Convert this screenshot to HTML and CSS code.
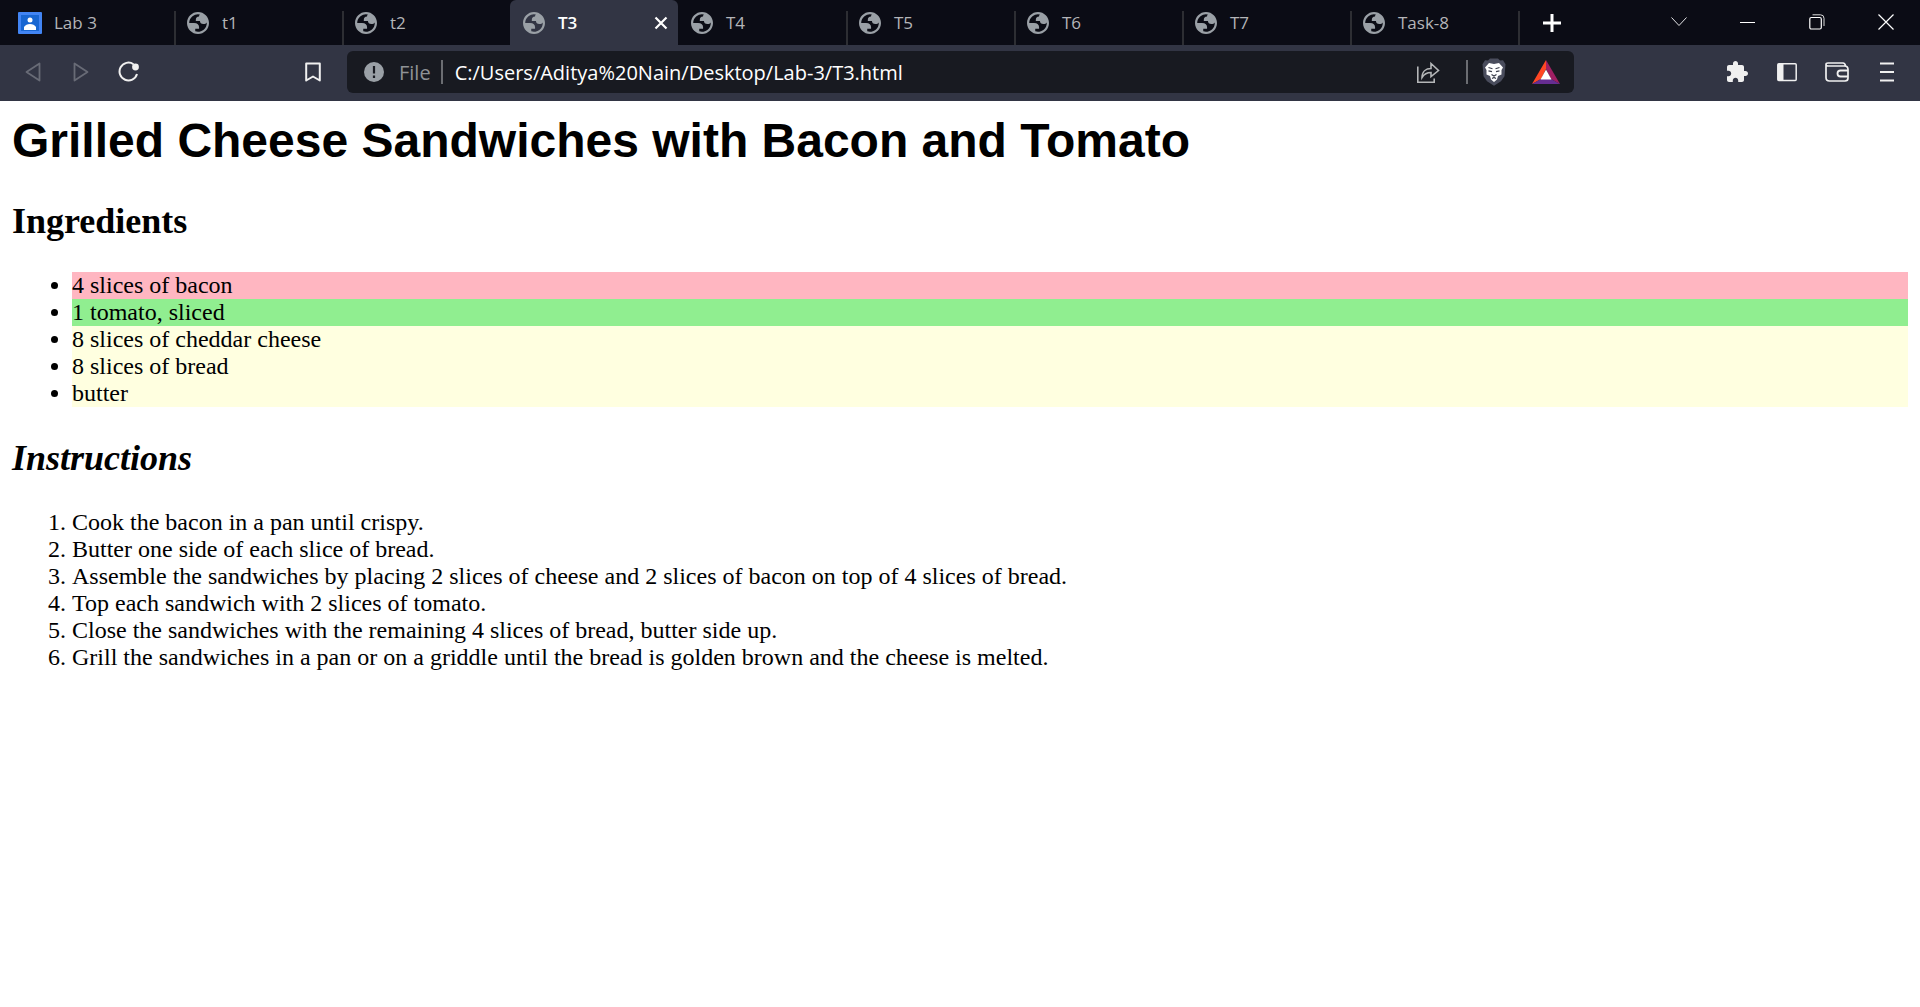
FILE: index.html
```html
<!DOCTYPE html>
<html lang="en">
<head>
<meta charset="utf-8">
<title>T3</title>
<link rel="stylesheet" href="styles.css">
</head>
<body>
<svg class="defs" aria-hidden="true">
  <symbol id="globe" viewBox="2 2 20 20"><path fill-rule="evenodd" d="M12 2c5.523 0 10 4.477 10 10s-4.477 10-10 10S2 17.523 2 12 6.477 2 12 2zM4 12h4.400c3.407.022 4.922 1.730 4.543 5.127H9.488v2.470a8.004 8.004 0 0 0 10.498-8.083C19.327 12.504 18.332 13 17 13c-2.137 0-3.206-.916-3.206-2.750h-3.748c-.274-2.728.683-4.092 2.870-4.092 0-.975.327-1.597.811-1.970A8.004 8.004 0 0 0 4 12z" fill="currentColor"/></symbol>
</svg>
<header class="chrome">
  <nav class="tab-strip" aria-label="Tabs">
    <a class="tab" href="#"><svg class="classroom" viewBox="0 0 24 22"><rect width="24" height="22" rx="1" fill="#4285f4"/><rect x="3" y="3" width="18" height="16" fill="#1967d2"/><circle cx="12" cy="8" r="2.500" fill="#fff"/><path d="M6 18v-3q2-3 6-3t6 3v3z" fill="#fff"/></svg><span>Lab 3</span></a>
    <a class="tab ruled" href="#"><svg class="globe"><use href="#globe"/></svg><span>t1</span></a>
    <a class="tab ruled" href="#"><svg class="globe"><use href="#globe"/></svg><span>t2</span></a>
    <div class="tab active"><svg class="globe"><use href="#globe"/></svg><span>T3</span><button class="tab-close" aria-label="Close tab"><svg width="14" height="14" viewBox="0 0 14 14"><path d="M1.500 1.500l11 11M12.500 1.500l-11 11" stroke="#fff" stroke-width="2.200"/></svg></button></div>
    <a class="tab" href="#"><svg class="globe"><use href="#globe"/></svg><span>T4</span></a>
    <a class="tab ruled" href="#"><svg class="globe"><use href="#globe"/></svg><span>T5</span></a>
    <a class="tab ruled" href="#"><svg class="globe"><use href="#globe"/></svg><span>T6</span></a>
    <a class="tab ruled" href="#"><svg class="globe"><use href="#globe"/></svg><span>T7</span></a>
    <a class="tab ruled" href="#"><svg class="globe"><use href="#globe"/></svg><span>Task-8</span></a>
    <button class="new-tab ruled" aria-label="New tab"><svg width="20" height="20" viewBox="0 0 20 20"><path d="M10 1v18M1 10h18" stroke="#fff" stroke-width="3"/></svg></button>
    <div class="window-controls">
      <button aria-label="Search tabs"><svg width="16" height="10" viewBox="0 0 16 10"><path d="M.5 .5L8 8.500L15.500 .5" fill="none" stroke="#e4e4e6"/></svg></button>
      <button aria-label="Minimize"><svg width="16" height="16" viewBox="0 0 16 16"><path d="M0 8.500h15" stroke="#fff"/></svg></button>
      <button aria-label="Restore"><svg width="16" height="16" viewBox="0 0 16 16"><rect x=".8" y="3.500" width="11.500" height="11.500" rx="1.500" fill="none" stroke="#fff" stroke-width="1.200"/><path d="M3.500 .8H11.500Q15 .8 15 4.300V12" fill="none" stroke="#ddd"/></svg></button>
      <button aria-label="Close"><svg width="16" height="16" viewBox="0 0 16 16"><path d="M.5 .5l15 15M15.500 .5l-15 15" stroke="#fff" stroke-width="1.200"/></svg></button>
    </div>
  </nav>
  <div class="toolbar">
    <div class="nav-buttons">
      <button aria-label="Back"><svg width="16" height="22" viewBox="0 0 16 22"><path d="M14.500 2.500v17L1.500 11z" fill="none" stroke="#686b76" stroke-width="1.800" stroke-linejoin="round"/></svg></button>
      <button aria-label="Forward"><svg width="16" height="22" viewBox="0 0 16 22"><path d="M1.500 2.500v17L14.500 11z" fill="none" stroke="#686b76" stroke-width="1.800" stroke-linejoin="round"/></svg></button>
      <button aria-label="Reload"><svg width="22" height="22" viewBox="0 0 22 22"><path d="M15.500 3.200A8.900 8.900 0 1 0 19 13" fill="none" stroke="#f0f0f0" stroke-width="2"/><circle cx="17.500" cy="6" r="3.400" fill="#f0f0f0"/></svg></button>
      <button class="bookmark" aria-label="Bookmark"><svg width="16" height="20" viewBox="0 0 16 20"><path d="M1.200 1.500h13.600v17L8 14.500l-6.800 4z" fill="none" stroke="#f0f0f0" stroke-width="2" stroke-linejoin="round"/></svg></button>
    </div>
    <div class="address">
      <svg width="20" height="20" viewBox="0 0 20 20"><circle cx="10" cy="10" r="10" fill="#9aa0a6"/><path d="M10 4v7.500M10 13.500v2.500" stroke="#181a21" stroke-width="2.200"/></svg>
      <label class="scheme" for="url">File</label>
      <span class="rule"></span>
      <input id="url" type="text" value="C:/Users/Aditya%20Nain/Desktop/Lab-3/T3.html">
      <button class="share" aria-label="Share"><svg width="24" height="24" viewBox="0 0 24 24"><path d="M1.800 6.500V22.200H18.200V18.500M6 17.500C6 11.500 10 8.500 15 8.500V3.500L22.500 10.500L15 16.500V12.500C11 12.500 8.500 13.500 6 17.500Z" fill="none" stroke="#b4b6b8" stroke-width="1.600"/></svg></button>
      <span class="rule"></span>
      <button aria-label="Brave Shields"><svg width="24" height="28" viewBox="0 0 24 28"><path d="M8 .5h8l2 2 3-.3 2.500 4-1 12-3.500 5-7 4.500-7-4.500-3.500-5-1-12 2.500-4 3 .3z" fill="#4a4d5d"/><path d="M7 5l5 1 5-1 4 4.500-1.500 2.500 0 4.500-3.500 1.500-1 3.500-3 2.500-3-2.500-1-3.500-3.500-1.500 0-4.500L3 9.500z" fill="#fff"/><path d="M6.500 9.500l4 1.200M17.500 9.500l-4 1.200M6.500 12.800l3.500.8M17.500 12.800l-3.500.8M9.500 16.500l2.500 1.500 2.500-1.500M10 20.500l2-1 2 1" fill="none" stroke="#3c3f4d" stroke-width="1.200"/></svg></button>
      <button aria-label="Brave Rewards"><svg width="28" height="24" viewBox="0 0 28 24"><path d="M14 0L0 24L9 19L14 9z" fill="#ff4724"/><path d="M14 0L28 24L19 19L14 9z" fill="#9e1f63"/><path d="M0 24L9 19h10l9 5z" fill="#662d91"/><path d="M14 9.500l5.500 10h-11z" fill="#fff"/></svg></button>
    </div>
    <div class="tools">
      <button aria-label="Extensions"><svg width="24" height="24" viewBox="0 0 24 24"><path d="M20.500 11H19V7c0-1.100-.9-2-2-2h-4V3.500C13 2.120 11.880 1 10.500 1S8 2.120 8 3.500V5H4c-1.100 0-1.990.9-1.990 2v3.800H3.500c1.490 0 2.700 1.210 2.700 2.700s-1.210 2.700-2.700 2.700H2V20c0 1.100.9 2 2 2h3.800v-1.500c0-1.490 1.210-2.700 2.700-2.700 1.490 0 2.700 1.210 2.700 2.700V22H17c1.100 0 2-.9 2-2v-4h1.500c1.380 0 2.500-1.120 2.500-2.500S21.880 11 20.500 11z" fill="#f0f0f0"/></svg></button>
      <button aria-label="Sidebar"><svg width="20" height="20" viewBox="0 0 20 20"><rect x=".8" y="1.800" width="18.400" height="16.800" rx="1" fill="none" stroke="#f0f0f0" stroke-width="1.500"/><path d="M1 2h5.500v16.500H1z" fill="#f0f0f0"/></svg></button>
      <button aria-label="Wallet"><svg width="24" height="20" viewBox="0 0 24 20"><path d="M1 3v12.500Q1 19 4.500 19H20q3 0 3-3V7.500Q23 4 19.500 4H3Q1 4 1 2.500T3 1h15q2 0 2.500 3" fill="none" stroke="#f0f0f0" stroke-width="1.700"/><path d="M23 8.500h-7.500a3 3 0 0 0 0 6H23" fill="none" stroke="#f0f0f0" stroke-width="1.800"/></svg></button>
      <button aria-label="Menu"><svg width="14" height="20" viewBox="0 0 14 20"><path d="M0 1.500h14M0 10h14M0 18.500h14" stroke="#f0f0f0" stroke-width="2"/></svg></button>
    </div>
  </div>
</header>
<main class="page">
  <h1>Grilled Cheese Sandwiches with Bacon and Tomato</h1>
  <h2>Ingredients</h2>
  <ul class="ingredients">
    <li class="bacon">4 slices of bacon</li>
    <li class="tomato">1 tomato, sliced</li>
    <li>8 slices of cheddar cheese</li>
    <li>8 slices of bread</li>
    <li>butter</li>
  </ul>
  <h2 class="instructions">Instructions</h2>
  <ol>
    <li>Cook the bacon in a pan until crispy.</li>
    <li>Butter one side of each slice of bread.</li>
    <li>Assemble the sandwiches by placing 2 slices of cheese and 2 slices of bacon on top of 4 slices of bread.</li>
    <li>Top each sandwich with 2 slices of tomato.</li>
    <li>Close the sandwiches with the remaining 4 slices of bread, butter side up.</li>
    <li>Grill the sandwiches in a pan or on a griddle until the bread is golden brown and the cheese is melted.</li>
  </ol>
</main>
</body>
</html>
```
FILE: styles.css
```css
* { box-sizing: border-box; }
body { margin: 0; background: #fff; color: #000; }
.defs { display: none; }
button { display: flex; align-items: center; justify-content: center; padding: 0; border: 0; background: none; }
svg { display: block; flex: none; }

/* Browser frame */
.chrome { background: #323544; font-family: "Open Sans", "Noto Sans", sans-serif; }
.tab-strip { display: flex; height: 45px; padding-left: 6px; background: #0b0c15; }
.tab { position: relative; display: flex; flex: 0 1 168px; align-items: center; gap: 13px; padding-left: 13px; color: #b4b5b8; font-size: 17px; text-decoration: none; }
.tab:first-child { gap: 12px; padding-left: 12px; }
.classroom { width: 24px; height: 22px; }
.globe { width: 22px; height: 22px; color: #9aa0a6; }
.ruled { position: relative; }
.ruled::before { content: ""; position: absolute; left: 0; top: 11px; bottom: 0; width: 2px; background: #2d2e33; }
.active { background: #323544; border-radius: 6px 6px 0 0; color: #fff; font-weight: 600; }
.tab-close { width: 34px; height: 45px; margin-left: auto; }
.new-tab { width: 68px; }
.window-controls { display: flex; margin-left: auto; }
.window-controls button { width: 69px; height: 43px; }

.toolbar { display: grid; grid-template-columns: 347fr 1227fr 346fr; align-items: center; height: 56px; padding-bottom: 2px; }
.nav-buttons, .tools { display: flex; }
.nav-buttons { padding: 0 10px 0 9px; }
.nav-buttons button { width: 48px; height: 42px; }
.nav-buttons .bookmark { margin-left: auto; }
.tools { justify-content: flex-end; padding-right: 8px; }
.tools button { width: 50px; height: 42px; }
.address { display: flex; align-items: center; height: 42px; padding: 0 2px 0 17px; border-radius: 6px; background: #181a21; }
.scheme { margin: 0 10px 0 15px; color: #8f9296; font-size: 20px; }
.rule { width: 2px; height: 24px; background: #6b6d72; }
.address input { flex: 1; min-width: 0; margin-left: 12px; padding: 0; border: 0; outline: 0; background: none; color: #fff; font: inherit; font-size: 20px; }
.address button { width: 52px; height: 42px; }
.address .share { margin-right: 12px; }

/* Recipe */
.page { padding: 12px; font: 24px/27px "Liberation Serif", "Times New Roman", serif; }
h1 { margin: 0 0 32px; font: bold 48px/55px "Liberation Sans", Arial, sans-serif; }
h2 { margin: 30px 0; font-size: 36px; line-height: 42px; }
.instructions { font-style: italic; }
ul, ol { margin: 0; padding-left: 60px; }
.ingredients li { background: lightyellow; }
.ingredients .bacon { background: lightpink; }
.ingredients .tomato { background: lightgreen; }
```
